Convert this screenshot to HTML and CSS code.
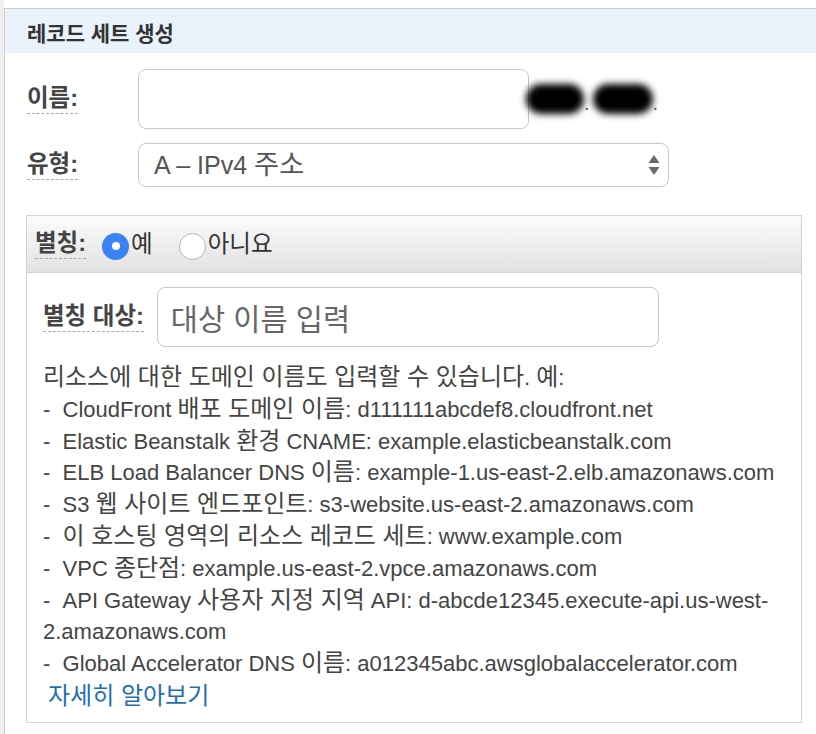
FILE: index.html
```html
<!DOCTYPE html>
<html lang="ko">
<head>
<meta charset="utf-8">
<title>레코드 세트 생성</title>
<link rel="stylesheet" href="styles.css">
</head>
<body>
<div class="page">
  <div class="strip"></div>
  <div class="main">
    <section class="panel">
      <header class="panel-head">레코드 세트 생성</header>
      <div class="panel-body">
        <div class="row row-name">
          <span class="lbl-cell"><span class="lbl">이름:</span></span>
          <div class="field name-field"></div>
          <span class="suffix"><span class="blob b1"></span><span class="dot">.</span><span class="blob b2"></span><span class="dot">.</span></span>
        </div>
        <div class="row row-type">
          <span class="lbl-cell"><span class="lbl">유형:</span></span>
          <div class="select">
            <span class="select-text">A – IPv4 <span class="ko">주소</span></span>
            <svg class="arrows" width="12" height="24" viewBox="0 0 12 24"><path d="M6 2 L11.5 10 H0.5 Z M0.5 14 H11.5 L6 22 Z" fill="#6b6b6b"/></svg>
          </div>
        </div>
        <div class="alias">
          <div class="alias-head">
            <span class="lbl">별칭:</span>
            <span class="radio on"></span><span class="opt">예</span>
            <span class="radio off"></span><span class="opt">아니요</span>
          </div>
          <div class="alias-body">
            <div class="target-row">
              <span class="lbl">별칭 대상:</span>
              <div class="field target-field">대상 이름 입력</div>
            </div>
            <div class="desc">
              <div class="line"><span class="ko">리소스에 대한 도메인 이름도 입력할 수 있습니다</span>. <span class="ko">예</span>:</div>
              <div class="line">- &nbsp;CloudFront <span class="ko">배포 도메인 이름</span>: d111111abcdef8.cloudfront.net</div>
              <div class="line">- &nbsp;Elastic Beanstalk <span class="ko">환경</span> CNAME: example.elasticbeanstalk.com</div>
              <div class="line">- &nbsp;ELB Load Balancer DNS <span class="ko">이름</span>: example-1.us-east-2.elb.amazonaws.com</div>
              <div class="line">- &nbsp;S3 <span class="ko">웹 사이트 엔드포인트</span>: s3-website.us-east-2.amazonaws.com</div>
              <div class="line">- &nbsp;<span class="ko">이 호스팅 영역의 리소스 레코드 세트</span>: www.example.com</div>
              <div class="line">- &nbsp;VPC <span class="ko">종단점</span>: example.us-east-2.vpce.amazonaws.com</div>
              <div class="line">- &nbsp;API Gateway <span class="ko">사용자 지정 지역</span> API: d-abcde12345.execute-api.us-west-<br>2.amazonaws.com</div>
              <div class="line">- &nbsp;Global Accelerator DNS <span class="ko">이름</span>: a012345abc.awsglobalaccelerator.com</div>
            </div>
            <a class="more" href="#">자세히 알아보기</a>
          </div>
        </div>
      </div>
    </section>
  </div>
</div>
</body>
</html>
```

FILE: styles.css
```css
html, body {
  margin: 0;
  padding: 0;
  background: #ffffff;
  overflow: hidden;
}

body {
  font-family: "Liberation Sans", "Noto Sans CJK KR", sans-serif;
  color: #444444;
}

.page {
  display: flex;
  min-height: 734px;
}

.strip {
  width: 4px;
  flex: none;
  background: #efefef;
}

.main {
  flex: none;
  width: 830px;
  padding-top: 8px;
}

.panel {
  border-top: 1px solid #cccccc;
  border-left: 1px solid #cccccc;
  min-height: 725px;
}

.panel-head {
  height: 44px;
  box-sizing: border-box;
  padding: 4px 0 0 22px;
  background: #eaf2fc;
  font-size: 21px;
  font-weight: bold;
  color: #333333;
  line-height: 42px;
}

.panel-body {
  padding: 16px 0 0 21px;
}

.row {
  display: flex;
  align-items: center;
}

.lbl-cell {
  width: 112px;
  flex: none;
  padding-left: 1px;
  box-sizing: border-box;
}

.lbl {
  display: inline-block;
  font-size: 23.5px;
  font-weight: bold;
  color: #444444;
  line-height: 27px;
  border-bottom: 1px dashed #aaaaaa;
  padding-bottom: 1px;
}

.field {
  box-sizing: border-box;
  border: 1.5px solid #c8c8c8;
  border-radius: 8px;
  background: #ffffff;
}

.name-field {
  width: 391px;
  height: 60px;
}

.suffix {
  display: flex;
  align-items: center;
  margin-left: -3px;
  height: 44px;
}

.blob {
  display: inline-block;
  height: 30px;
  background: #000000;
  border-radius: 15px;
  filter: blur(3.5px);
}

.b1 {
  width: 58px;
}

.b2 {
  width: 60px;
  margin-left: 3px;
}

.dot {
  color: #666666;
  font-size: 20px;
  line-height: 20px;
  padding-top: 8px;
}

.ko {
  font-size: 1.09em;
  line-height: 1;
}

.row-type {
  margin-top: 14px;
}

.select {
  box-sizing: border-box;
  width: 531px;
  height: 44px;
  border: 1.5px solid #c8c8c8;
  border-radius: 8px;
  display: flex;
  align-items: center;
  justify-content: space-between;
  padding: 0 8px 0 15px;
}

.select-text {
  font-size: 25px;
  line-height: 30px;
  color: #555555;
}

.alias {
  margin-top: 28px;
  width: 776px;
  box-sizing: border-box;
  border: 1.5px solid #d2d2d2;
}

.alias-head {
  height: 57px;
  box-sizing: border-box;
  border-bottom: 1.5px solid #d2d2d2;
  background: linear-gradient(#fbfbfb, #e2e2e2);
  display: flex;
  align-items: center;
  padding-left: 8px;
}

.radio {
  box-sizing: border-box;
  width: 27px;
  height: 27px;
  border-radius: 50%;
  flex: none;
  margin-top: 4px;
}

.radio.on {
  margin-left: 16px;
  background: #3b82f5;
  position: relative;
}

.radio.on::after {
  content: "";
  position: absolute;
  left: 9.5px;
  top: 9.5px;
  width: 8px;
  height: 8px;
  border-radius: 50%;
  background: #ffffff;
}

.radio.off {
  margin-left: 26px;
  background: #ffffff;
  border: 1px solid #b5b5b5;
}

.opt {
  font-size: 23.5px;
  color: #333333;
  margin-left: 2px;
  margin-top: -4px;
}

.alias-body {
  padding: 14px 16px 10px 16px;
}

.target-row {
  display: flex;
  align-items: center;
  gap: 13px;
}

.target-field {
  width: 502px;
  height: 60px;
  display: flex;
  align-items: center;
  padding-left: 13px;
  font-size: 29.5px;
  color: #666666;
}

.desc {
  margin-top: 15px;
  font-size: 22px;
  line-height: 31.8px;
  color: #444444;
  white-space: nowrap;
}

.more {
  display: block;
  padding-left: 5px;
  font-size: 24px;
  line-height: 31.8px;
  color: #1f6fb2;
  text-decoration: none;
}
```
